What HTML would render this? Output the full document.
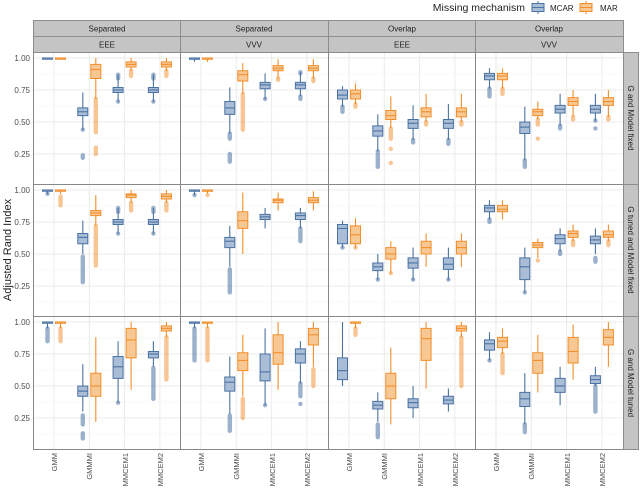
<!DOCTYPE html>
<html><head><meta charset="utf-8"><style>
html,body{margin:0;padding:0;background:#fff;width:640px;height:491px;overflow:hidden}
svg{display:block;font-family:"Liberation Sans",sans-serif}
.B path,.B rect,.O path,.O rect,.bo path,.oo path{vector-effect:non-scaling-stroke}
.B path{stroke:#4a72a3;stroke-width:1.1;fill:none}
.B rect{stroke:#4a72a3;stroke-width:1;fill:#a9bdd6}
.O path{stroke:#f28e2b;stroke-width:1.1;fill:none}
.O rect{stroke:#f28e2b;stroke-width:1;fill:#f8c894}
.bo path{stroke:#4a72a3;stroke-width:4.4;stroke-linecap:round;fill:none;opacity:.55}
.oo path{stroke:#f28e2b;stroke-width:4.4;stroke-linecap:round;fill:none;opacity:.5}
</style></head><body>
<svg width="640" height="491" viewBox="0 0 640 491" xmlns="http://www.w3.org/2000/svg">
<g stroke="#ebebeb" stroke-width="1">
<path d="M33 58H623M33 90H623M33 122H623M33 154H623M33 190H623M33 222H623M33 254H623M33 286H623M33 322H623M33 354H623M33 386H623M33 418H623"/>
<path d="M54 52V449M89.3 52V449M124.6 52V449M159.9 52V449M201 52V449M236.3 52V449M271.6 52V449M306.9 52V449M349 52V449M384.3 52V449M419.6 52V449M454.9 52V449M496 52V449M531.3 52V449M566.6 52V449M601.9 52V449"/>
</g>
<g stroke="#f4f4f4" stroke-width="0.6">
<path d="M33 74H623M33 106H623M33 138H623M33 170H623M33 206H623M33 238H623M33 270H623M33 302H623M33 338H623M33 370H623M33 402H623M33 434H623"/>
</g>

<!-- ROW 0 -->
<g transform="translate(0,186) scale(1,-128)">
<g class="bo"><path d="M82.8 .22V.24M82.8 .44V.44M118.1 .66V.66M118.1 .84V.87M153.4 .66V.66M153.4 .84V.87M229.8 .19V.25M229.8 .37V.41M265.1 .68V.68M300.4 .68V.7M300.4 .88V.89M377.8 .15V.25M377.8 .27V.27M342.5 .58V.62M413.1 .34V.36M448.4 .33V.36M524.8 .15V.2M489.5 .7V.76M560.1 .45V.47M595.4 .45V.45M595.4 .51V.51"/></g>
<g class="oo"><path d="M95.8 .25V.3M95.8 .42V.68M131.1 .86V.9M166.4 .86V.9M242.8 .44V.72M278.1 .83V.84M313.4 .82V.84M390.8 .18V.18M390.8 .29V.29M390.8 .37V.45M355.5 .62V.64M426.1 .48V.5M461.4 .48V.5M537.8 .37V.37M537.8 .48V.52M502.5 .72V.76M573.1 .52V.54M608.4 .52V.54"/></g>
<g class="B">
<path d="M47.5 .99V1"/><rect x="42.5" y=".99" width="10" height=".01"/><path d="M42.5 1h10"/>
<path d="M82.8 .44V.73"/><rect x="77.8" y=".55" width="10" height=".06"/><path d="M77.8 .58h10"/>
<path d="M118.1 .66V.87"/><rect x="113.1" y=".73" width="10" height=".04"/><path d="M113.1 .75h10"/>
<path d="M153.4 .66V.87"/><rect x="148.4" y=".73" width="10" height=".04"/><path d="M148.4 .75h10"/>
<path d="M194.5 .97V1"/><rect x="189.5" y=".99" width="10" height=".01"/><path d="M189.5 1h10"/>
<path d="M229.8 .41V.77"/><rect x="224.8" y=".56" width="10" height=".1"/><path d="M224.8 .61h10"/>
<path d="M265.1 .68V.88"/><rect x="260.1" y=".76" width="10" height=".05"/><path d="M260.1 .79h10"/>
<path d="M300.4 .7V.89"/><rect x="295.4" y=".76" width="10" height=".05"/><path d="M295.4 .79h10"/>
<path d="M342.5 .62V.78"/><rect x="337.5" y=".68" width="10" height=".07"/><path d="M337.5 .71h10"/>
<path d="M377.8 .27V.56"/><rect x="372.8" y=".39" width="10" height=".08"/><path d="M372.8 .43h10"/>
<path d="M413.1 .36V.63"/><rect x="408.1" y=".45" width="10" height=".07"/><path d="M408.1 .49h10"/>
<path d="M448.4 .36V.64"/><rect x="443.4" y=".45" width="10" height=".07"/><path d="M443.4 .49h10"/>
<path d="M489.5 .76V.92"/><rect x="484.5" y=".83" width="10" height=".05"/><path d="M484.5 .86h10"/>
<path d="M524.8 .2V.62"/><rect x="519.8" y=".41" width="10" height=".09"/><path d="M519.8 .46h10"/>
<path d="M560.1 .47V.72"/><rect x="555.1" y=".57" width="10" height=".06"/><path d="M555.1 .6h10"/>
<path d="M595.4 .51V.72"/><rect x="590.4" y=".57" width="10" height=".06"/><path d="M590.4 .6h10"/>
</g>
<g class="O">
<path d="M60.5 .99V1"/><rect x="55.5" y=".99" width="10" height=".01"/><path d="M55.5 1h10"/>
<path d="M95.8 .68V1"/><rect x="90.8" y=".84" width="10" height=".11"/><path d="M90.8 .91h10"/>
<path d="M131.1 .9V1"/><rect x="126.1" y=".93" width="10" height=".04"/><path d="M126.1 .95h10"/>
<path d="M166.4 .9V1"/><rect x="161.4" y=".93" width="10" height=".04"/><path d="M161.4 .95h10"/>
<path d="M207.5 .97V1"/><rect x="202.5" y=".99" width="10" height=".01"/><path d="M202.5 1h10"/>
<path d="M242.8 .72V.96"/><rect x="237.8" y=".82" width="10" height=".08"/><path d="M237.8 .87h10"/>
<path d="M278.1 .84V.99"/><rect x="273.1" y=".9" width="10" height=".04"/><path d="M273.1 .92h10"/>
<path d="M313.4 .84V.99"/><rect x="308.4" y=".9" width="10" height=".04"/><path d="M308.4 .92h10"/>
<path d="M355.5 .64V.8"/><rect x="350.5" y=".68" width="10" height=".07"/><path d="M350.5 .72h10"/>
<path d="M390.8 .45V.7"/><rect x="385.8" y=".52" width="10" height=".07"/><path d="M385.8 .55h10"/>
<path d="M426.1 .5V.72"/><rect x="421.1" y=".54" width="10" height=".07"/><path d="M421.1 .58h10"/>
<path d="M461.4 .5V.72"/><rect x="456.4" y=".54" width="10" height=".07"/><path d="M456.4 .58h10"/>
<path d="M502.5 .76V.92"/><rect x="497.5" y=".83" width="10" height=".05"/><path d="M497.5 .86h10"/>
<path d="M537.8 .52V.66"/><rect x="532.8" y=".55" width="10" height=".05"/><path d="M532.8 .58h10"/>
<path d="M573.1 .54V.75"/><rect x="568.1" y=".63" width="10" height=".06"/><path d="M568.1 .66h10"/>
<path d="M608.4 .54V.75"/><rect x="603.4" y=".63" width="10" height=".06"/><path d="M603.4 .66h10"/>
</g>
</g>

<!-- ROW 1 -->
<g transform="translate(0,318) scale(1,-128)">
<g class="bo"><path d="M47.5 .97V.97M82.8 .28V.48M118.1 .66V.66M118.1 .83V.86M153.4 .66V.66M153.4 .83V.86M194.5 .96V.96M229.8 .2V.38M300.4 .6V.7M342.5 .55V.55M377.8 .3V.3M413.1 .3V.3M448.4 .3V.3M489.5 .75V.77M524.8 .2V.2M560.1 .5V.52M595.4 .44V.47"/></g>
<g class="oo"><path d="M60.5 .88V.95M95.8 .41V.72M131.1 .84V.9M166.4 .84V.9M207.5 .96V.96M355.5 .55V.55M390.8 .35V.35M537.8 .45V.45M573.1 .57V.6M608.4 .57V.6"/></g>
<g class="B">
<path d="M47.5 .97V1"/><rect x="42.5" y=".99" width="10" height=".01"/><path d="M42.5 1h10"/>
<path d="M82.8 .5V.76"/><rect x="77.8" y=".58" width="10" height=".08"/><path d="M77.8 .63h10"/>
<path d="M118.1 .66V.86"/><rect x="113.1" y=".73" width="10" height=".04"/><path d="M113.1 .75h10"/>
<path d="M153.4 .66V.86"/><rect x="148.4" y=".73" width="10" height=".04"/><path d="M148.4 .75h10"/>
<path d="M194.5 .96V1"/><rect x="189.5" y=".99" width="10" height=".01"/><path d="M189.5 1h10"/>
<path d="M229.8 .4V.72"/><rect x="224.8" y=".55" width="10" height=".08"/><path d="M224.8 .6h10"/>
<path d="M265.1 .7V.86"/><rect x="260.1" y=".77" width="10" height=".04"/><path d="M260.1 .79h10"/>
<path d="M300.4 .7V.86"/><rect x="295.4" y=".77" width="10" height=".05"/><path d="M295.4 .8h10"/>
<path d="M342.5 .55V.76"/><rect x="337.5" y=".58" width="10" height=".15"/><path d="M337.5 .7h10"/>
<path d="M377.8 .3V.5"/><rect x="372.8" y=".37" width="10" height=".06"/><path d="M372.8 .4h10"/>
<path d="M413.1 .3V.55"/><rect x="408.1" y=".39" width="10" height=".08"/><path d="M408.1 .43h10"/>
<path d="M448.4 .3V.55"/><rect x="443.4" y=".38" width="10" height=".09"/><path d="M443.4 .42h10"/>
<path d="M489.5 .77V.92"/><rect x="484.5" y=".83" width="10" height=".05"/><path d="M484.5 .86h10"/>
<path d="M524.8 .2V.55"/><rect x="519.8" y=".3" width="10" height=".17"/><path d="M519.8 .4h10"/>
<path d="M560.1 .52V.7"/><rect x="555.1" y=".58" width="10" height=".07"/><path d="M555.1 .62h10"/>
<path d="M595.4 .5V.7"/><rect x="590.4" y=".58" width="10" height=".06"/><path d="M590.4 .61h10"/>
</g>
<g class="O">
<path d="M60.5 .97V1"/><rect x="55.5" y=".99" width="10" height=".01"/><path d="M55.5 1h10"/>
<path d="M95.8 .72V.96"/><rect x="90.8" y=".8" width="10" height=".04"/><path d="M90.8 .82h10"/>
<path d="M131.1 .9V1"/><rect x="126.1" y=".94" width="10" height=".03"/><path d="M126.1 .96h10"/>
<path d="M166.4 .9V1"/><rect x="161.4" y=".93" width="10" height=".04"/><path d="M161.4 .95h10"/>
<path d="M207.5 .97V1"/><rect x="202.5" y=".99" width="10" height=".01"/><path d="M202.5 1h10"/>
<path d="M242.8 .5V.98"/><rect x="237.8" y=".7" width="10" height=".13"/><path d="M237.8 .76h10"/>
<path d="M278.1 .84V.98"/><rect x="273.1" y=".9" width="10" height=".03"/><path d="M273.1 .92h10"/>
<path d="M313.4 .84V.99"/><rect x="308.4" y=".9" width="10" height=".04"/><path d="M308.4 .92h10"/>
<path d="M355.5 .55V.78"/><rect x="350.5" y=".58" width="10" height=".14"/><path d="M350.5 .65h10"/>
<path d="M390.8 .35V.6"/><rect x="385.8" y=".46" width="10" height=".09"/><path d="M385.8 .5h10"/>
<path d="M426.1 .4V.66"/><rect x="421.1" y=".5" width="10" height=".1"/><path d="M421.1 .55h10"/>
<path d="M461.4 .4V.66"/><rect x="456.4" y=".5" width="10" height=".1"/><path d="M456.4 .55h10"/>
<path d="M502.5 .77V.92"/><rect x="497.5" y=".83" width="10" height=".05"/><path d="M497.5 .85h10"/>
<path d="M537.8 .47V.62"/><rect x="532.8" y=".55" width="10" height=".04"/><path d="M532.8 .57h10"/>
<path d="M573.1 .6V.73"/><rect x="568.1" y=".63" width="10" height=".05"/><path d="M568.1 .66h10"/>
<path d="M608.4 .6V.73"/><rect x="603.4" y=".63" width="10" height=".05"/><path d="M603.4 .65h10"/>
</g>
</g>

<!-- ROW 2 -->
<g transform="translate(0,450) scale(1,-128)">
<g class="bo"><path d="M47.5 .85V.95M82.8 .09V.13M82.8 .2V.27M118.1 .37V.37M153.4 .4V.64M194.5 .7V.95M229.8 .15V.27M265.1 .35V.35M300.4 .36V.36M300.4 .42V.52M377.8 .1V.2M489.5 .7V.7M524.8 .14V.2M595.4 .3V.5"/></g>
<g class="oo"><path d="M60.5 .85V.95M166.4 .55V.88M207.5 .7V.95M242.8 .25V.4M313.4 .5V.63M355.5 .9V.95M461.4 .5V.88M502.5 .6V.75"/></g>
<g class="B">
<path d="M47.5 .95V1"/><rect x="42.5" y=".99" width="10" height=".01"/><path d="M42.5 1h10"/>
<path d="M82.8 .3V.67"/><rect x="77.8" y=".42" width="10" height=".08"/><path d="M77.8 .46h10"/>
<path d="M118.1 .37V.85"/><rect x="113.1" y=".56" width="10" height=".17"/><path d="M113.1 .65h10"/>
<path d="M153.4 .65V.85"/><rect x="148.4" y=".72" width="10" height=".05"/><path d="M148.4 .75h10"/>
<path d="M194.5 .95V1"/><rect x="189.5" y=".99" width="10" height=".01"/><path d="M189.5 1h10"/>
<path d="M229.8 .28V.73"/><rect x="224.8" y=".46" width="10" height=".11"/><path d="M224.8 .53h10"/>
<path d="M265.1 .35V.95"/><rect x="260.1" y=".54" width="10" height=".21"/><path d="M260.1 .61h10"/>
<path d="M300.4 .52V.85"/><rect x="295.4" y=".68" width="10" height=".11"/><path d="M295.4 .75h10"/>
<path d="M342.5 .5V1"/><rect x="337.5" y=".55" width="10" height=".17"/><path d="M337.5 .62h10"/>
<path d="M377.8 .22V.45"/><rect x="372.8" y=".32" width="10" height=".06"/><path d="M372.8 .35h10"/>
<path d="M413.1 .25V.5"/><rect x="408.1" y=".33" width="10" height=".07"/><path d="M408.1 .37h10"/>
<path d="M448.4 .3V.48"/><rect x="443.4" y=".36" width="10" height=".06"/><path d="M443.4 .39h10"/>
<path d="M489.5 .7V.92"/><rect x="484.5" y=".78" width="10" height=".08"/><path d="M484.5 .83h10"/>
<path d="M524.8 .2V.6"/><rect x="519.8" y=".34" width="10" height=".11"/><path d="M519.8 .4h10"/>
<path d="M560.1 .35V.65"/><rect x="555.1" y=".45" width="10" height=".11"/><path d="M555.1 .5h10"/>
<path d="M595.4 .5V.65"/><rect x="590.4" y=".52" width="10" height=".06"/><path d="M590.4 .55h10"/>
</g>
<g class="O">
<path d="M60.5 .95V1"/><rect x="55.5" y=".99" width="10" height=".01"/><path d="M55.5 1h10"/>
<path d="M95.8 .22V.88"/><rect x="90.8" y=".42" width="10" height=".18"/><path d="M90.8 .5h10"/>
<path d="M131.1 .47V1"/><rect x="126.1" y=".72" width="10" height=".23"/><path d="M126.1 .86h10"/>
<path d="M166.4 .88V1"/><rect x="161.4" y=".93" width="10" height=".04"/><path d="M161.4 .95h10"/>
<path d="M207.5 .95V1"/><rect x="202.5" y=".99" width="10" height=".01"/><path d="M202.5 1h10"/>
<path d="M242.8 .42V.9"/><rect x="237.8" y=".62" width="10" height=".14"/><path d="M237.8 .7h10"/>
<path d="M278.1 .47V1"/><rect x="273.1" y=".67" width="10" height=".23"/><path d="M273.1 .76h10"/>
<path d="M313.4 .65V1"/><rect x="308.4" y=".82" width="10" height=".13"/><path d="M308.4 .9h10"/>
<path d="M355.5 .95V1"/><rect x="350.5" y=".99" width="10" height=".01"/><path d="M350.5 1h10"/>
<path d="M390.8 .2V.8"/><rect x="385.8" y=".4" width="10" height=".2"/><path d="M385.8 .5h10"/>
<path d="M426.1 .48V1"/><rect x="421.1" y=".7" width="10" height=".25"/><path d="M421.1 .87h10"/>
<path d="M461.4 .88V1"/><rect x="456.4" y=".93" width="10" height=".04"/><path d="M456.4 .95h10"/>
<path d="M502.5 .75V.95"/><rect x="497.5" y=".8" width="10" height=".08"/><path d="M497.5 .85h10"/>
<path d="M537.8 .45V.9"/><rect x="532.8" y=".6" width="10" height=".16"/><path d="M532.8 .7h10"/>
<path d="M573.1 .55V.98"/><rect x="568.1" y=".68" width="10" height=".2"/><path d="M568.1 .77h10"/>
<path d="M608.4 .65V1"/><rect x="603.4" y=".82" width="10" height=".12"/><path d="M603.4 .88h10"/>
</g>
</g>

<g fill="none" stroke="#888" stroke-width="1">
<rect x="33.5" y="52.5" width="147" height="132"/><rect x="180.5" y="52.5" width="148" height="132"/><rect x="328.5" y="52.5" width="147" height="132"/><rect x="475.5" y="52.5" width="148" height="132"/>
<rect x="33.5" y="184.5" width="147" height="132"/><rect x="180.5" y="184.5" width="148" height="132"/><rect x="328.5" y="184.5" width="147" height="132"/><rect x="475.5" y="184.5" width="148" height="132"/>
<rect x="33.5" y="316.5" width="147" height="133"/><rect x="180.5" y="316.5" width="148" height="133"/><rect x="328.5" y="316.5" width="147" height="133"/><rect x="475.5" y="316.5" width="148" height="133"/>
</g>
<g fill="#c4c4c4" stroke="#8c8c8c" stroke-width="1">
<rect x="33.5" y="20.5" width="147" height="16"/><rect x="180.5" y="20.5" width="148" height="16"/><rect x="328.5" y="20.5" width="147" height="16"/><rect x="475.5" y="20.5" width="148" height="16"/>
<rect x="33.5" y="36.5" width="147" height="16"/><rect x="180.5" y="36.5" width="148" height="16"/><rect x="328.5" y="36.5" width="147" height="16"/><rect x="475.5" y="36.5" width="148" height="16"/>
<rect x="623.5" y="52.5" width="15" height="132"/><rect x="623.5" y="184.5" width="15" height="132"/><rect x="623.5" y="316.5" width="15" height="133"/>
</g>
<g font-size="8" fill="#222" text-anchor="middle">
<text x="107" y="31.5">Separated</text><text x="254" y="31.5">Separated</text><text x="402" y="31.5">Overlap</text><text x="549" y="31.5">Overlap</text>
<text x="107" y="47.5">EEE</text><text x="254" y="47.5">VVV</text><text x="402" y="47.5">EEE</text><text x="549" y="47.5">VVV</text>
<text transform="translate(628,118) rotate(90)">G and Model fixed</text>
<text transform="translate(628,250) rotate(90)">G tuned and Model fixed</text>
<text transform="translate(628,383) rotate(90)">G and Model tuned</text>
</g>
<g font-size="8" fill="#4d4d4d" text-anchor="end">
<text x="30" y="61">1.00</text><text x="30" y="93">0.75</text><text x="30" y="125">0.50</text><text x="30" y="157">0.25</text>
<text x="30" y="193">1.00</text><text x="30" y="225">0.75</text><text x="30" y="257">0.50</text><text x="30" y="289">0.25</text>
<text x="30" y="325">1.00</text><text x="30" y="357">0.75</text><text x="30" y="389">0.50</text><text x="30" y="421">0.25</text>
</g>
<text transform="translate(11,250) rotate(-90)" font-size="11" text-anchor="middle" fill="#222">Adjusted Rand Index</text>
<g font-size="7.5" fill="#4d4d4d" text-anchor="end">
<text transform="translate(57,453) rotate(-90)">GMM</text><text transform="translate(92,453) rotate(-90)">GMMMI</text><text transform="translate(128,453) rotate(-90)">MMCEM1</text><text transform="translate(163,453) rotate(-90)">MMCEM2</text>
<text transform="translate(204,453) rotate(-90)">GMM</text><text transform="translate(239,453) rotate(-90)">GMMMI</text><text transform="translate(275,453) rotate(-90)">MMCEM1</text><text transform="translate(310,453) rotate(-90)">MMCEM2</text>
<text transform="translate(352,453) rotate(-90)">GMM</text><text transform="translate(387,453) rotate(-90)">GMMMI</text><text transform="translate(423,453) rotate(-90)">MMCEM1</text><text transform="translate(458,453) rotate(-90)">MMCEM2</text>
<text transform="translate(499,453) rotate(-90)">GMM</text><text transform="translate(534,453) rotate(-90)">GMMMI</text><text transform="translate(570,453) rotate(-90)">MMCEM1</text><text transform="translate(605,453) rotate(-90)">MMCEM2</text>
</g>
<text x="525" y="11" font-size="10.5" fill="#222" text-anchor="end">Missing mechanism</text>
<g stroke="#4a72a3" fill="#a9bdd6"><line x1="538" y1="1" x2="538" y2="14"/><rect x="532" y="3.5" width="12" height="8"/><line x1="532" y1="7.5" x2="544" y2="7.5"/></g>
<text x="550" y="11" font-size="8" fill="#222">MCAR</text>
<g stroke="#f28e2b" fill="#f8c894"><line x1="586" y1="1" x2="586" y2="14"/><rect x="580" y="3.5" width="12" height="8"/><line x1="580" y1="7.5" x2="592" y2="7.5"/></g>
<text x="600" y="11" font-size="8" fill="#222">MAR</text>
</svg>
</body></html>
